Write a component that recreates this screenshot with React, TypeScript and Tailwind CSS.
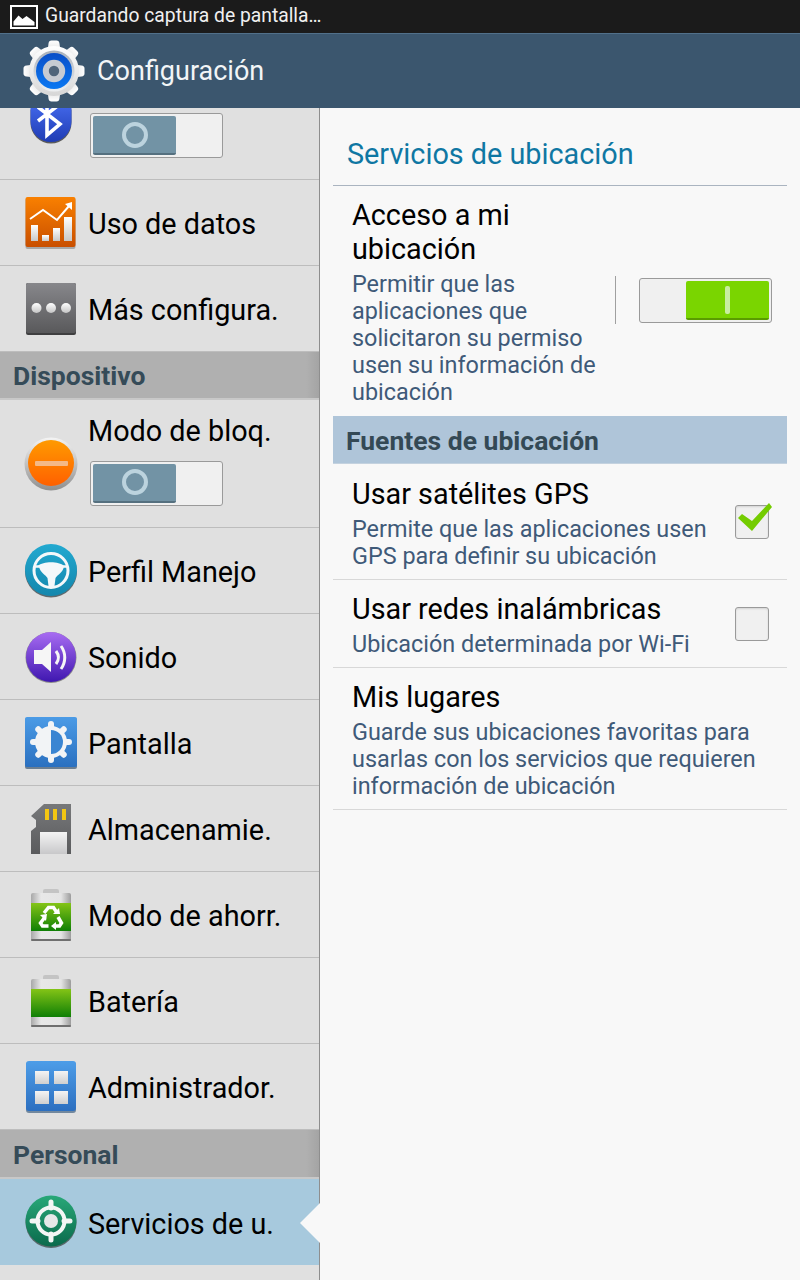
import type { ReactNode } from 'react';

const roboto = { fontFamily: 'Roboto, sans-serif' };

function Gradient({ id, from, to }: { id: string; from: string; to: string }) {
  return (
    <linearGradient id={id} x1="0" y1="0" x2="0" y2="1">
      <stop offset="0" stopColor={from} />
      <stop offset="1" stopColor={to} />
    </linearGradient>
  );
}

function ScreenshotIcon() {
  return (
    <svg width="28" height="24" viewBox="0 0 28 24">
      <rect x="1" y="1" width="26" height="22" fill="none" stroke="#fff" strokeWidth="2" />
      <path d="M3.500 20.500v-4l5-6 4 3.500 4-3 8 6v3.500z" fill="#fff" />
    </svg>
  );
}

function GearIcon() {
  const teeth = [0, 45, 90, 135, 180, 225, 270, 315];
  return (
    <svg width="62" height="62" viewBox="0 0 62 62">
      <defs>
        <Gradient id="gear" from="#ffffff" to="#d6d6d6" />
        <Gradient id="gearRing" from="#a9b0ba" to="#eef0f2" />
        <Gradient id="gearBlue" from="#0a4fc8" to="#0a78f2" />
      </defs>
      {teeth.map((a) => (
        <path key={a} d="M24 16l1.500-12.500q.3-3 3-3h5q2.700 0 3 3L38 16z" fill="url(#gear)" transform={`rotate(${a} 31 31)`} />
      ))}
      <circle cx="31" cy="31" r="25" fill="url(#gear)" />
      <circle cx="31" cy="31" r="20.500" fill="url(#gearRing)" />
      <circle cx="31" cy="31" r="18" fill="url(#gearBlue)" />
      <circle cx="31" cy="31" r="8.200" fill="#50657a" stroke="#c6cbd2" strokeWidth="6" />
    </svg>
  );
}

function BluetoothIcon() {
  return (
    <svg width="42" height="36" viewBox="0 0 42 36">
      <defs>
        <Gradient id="bt" from="#3f63e4" to="#1f3cb4" />
      </defs>
      <path d="M0.500 0h41v13.500a20.500 20.500 0 0 1-41 0z" fill="#5b5b5b" transform="translate(0 1.500)" />
      <path d="M0.500 0h41v13.500a20.500 20.500 0 0 1-41 0z" fill="url(#bt)" />
      <path d="M8 -1l22 17-13 11V-13l13 9-22 17" fill="none" stroke="#fff" strokeWidth="3.600" />
    </svg>
  );
}

function DataIcon() {
  return (
    <svg width="52" height="52" viewBox="0 0 52 52">
      <defs>
        <Gradient id="dataBg" from="#f98000" to="#c94f00" />
        <Gradient id="dataBar" from="#ffffff" to="#c8c8c8" />
      </defs>
      <rect x="0.500" y="1" width="50" height="51" rx="2" fill="#a8a8a8" />
      <rect x="0.500" y="0" width="50" height="50" rx="2" fill="url(#dataBg)" />
      <path d="M5 22l13-9 14 10 12-14" fill="none" stroke="#fff" strokeWidth="2" />
      <path d="M40 7l7-2v8z" fill="#fff" />
      <rect x="6" y="28" width="7" height="16" fill="url(#dataBar)" />
      <rect x="17" y="38" width="7" height="6" fill="url(#dataBar)" />
      <rect x="28" y="31" width="7" height="13" fill="url(#dataBar)" />
      <rect x="39" y="20" width="8" height="24" fill="url(#dataBar)" />
    </svg>
  );
}

function MoreIcon() {
  return (
    <svg width="52" height="52" viewBox="0 0 52 52">
      <defs>
        <Gradient id="moreBg" from="#87878b" to="#59595b" />
        <Gradient id="moreDot" from="#ffffff" to="#c4c4c4" />
      </defs>
      <rect x="1" y="0" width="50" height="52" rx="2" fill="#3f3f40" />
      <rect x="1" y="0" width="50" height="50" rx="2" fill="url(#moreBg)" />
      <circle cx="11.500" cy="25" r="5" fill="url(#moreDot)" />
      <circle cx="26" cy="25" r="5" fill="url(#moreDot)" />
      <circle cx="41" cy="25" r="5" fill="url(#moreDot)" />
    </svg>
  );
}

function BlockIcon() {
  return (
    <svg width="54" height="54" viewBox="0 0 54 54">
      <defs>
        <Gradient id="blockRim" from="#f4f4f4" to="#8f8f8f" />
        <Gradient id="blockBg" from="#ff9a00" to="#ff6000" />
      </defs>
      <circle cx="27" cy="27" r="26.500" fill="url(#blockRim)" />
      <circle cx="27" cy="26" r="23" fill="url(#blockBg)" />
      <rect x="11" y="24" width="33" height="5" rx="1" fill="#f4b987" />
    </svg>
  );
}

function DriveIcon() {
  return (
    <svg width="54" height="54" viewBox="0 0 54 54">
      <defs>
        <Gradient id="driveBg" from="#22a9d0" to="#1487ad" />
      </defs>
      <circle cx="27" cy="27.500" r="26" fill="#606a6e" />
      <circle cx="27" cy="26" r="26" fill="url(#driveBg)" />
      <circle cx="27" cy="26.500" r="17" fill="none" stroke="#f4f8fa" strokeWidth="3" />
      <path d="M10 22.500h34" stroke="#f4f8fa" strokeWidth="2.500" />
      <path d="M14 22c5-5 21-5 26 0-1 7-7 9-8.500 12l-1 8h-6l-1-8c-1.500-3-7.500-5-8.500-12z" fill="#f4f8fa" />
    </svg>
  );
}

function SoundIcon() {
  return (
    <svg width="52" height="52" viewBox="0 0 52 52">
      <defs>
        <Gradient id="soundBg" from="#a86cf2" to="#3f17b0" />
      </defs>
      <circle cx="26" cy="26.500" r="25.500" fill="#8a8a8a" />
      <circle cx="26" cy="26" r="25" fill="url(#soundBg)" />
      <path d="M9 19h8l9-8v30l-9-8H9z" fill="#f6f6f6" />
      <path d="M31 20c3 4 3 9 0 13M36 15c5 7 5 16 0 23" fill="none" stroke="#f6f6f6" strokeWidth="3" />
    </svg>
  );
}

function DisplayIcon() {
  const rays = [0, 45, 90, 135, 180, 225, 270, 315];
  return (
    <svg width="52" height="52" viewBox="0 0 52 52">
      <defs>
        <Gradient id="displayBg" from="#4b9be6" to="#2a70c0" />
      </defs>
      <rect x="0" y="1" width="52" height="51" rx="2" fill="#6c7f92" />
      <rect x="0" y="0" width="52" height="50" rx="2" fill="url(#displayBg)" />
      {rays.map((a) => (
        <rect key={a} x="23" y="4" width="6" height="10" rx="3" fill="#f2f4f6" transform={`rotate(${a} 26 25)`} />
      ))}
      <circle cx="26" cy="25" r="16" fill="#f2f4f6" />
      <path d="M26 13a12 12 0 0 1 0 24z" fill="#3a85d2" />
    </svg>
  );
}

function StorageIcon() {
  return (
    <svg width="42" height="50" viewBox="0 0 42 50">
      <defs>
        <Gradient id="sdBg" from="#77787a" to="#5a5b5d" />
        <Gradient id="sdLabel" from="#f4f4f4" to="#c8c8ca" />
      </defs>
      <path d="M14 0h27v50H1V27l5-4V16l-5-4z" fill="url(#sdBg)" />
      <rect x="15" y="5" width="4" height="11" fill="#f3c612" />
      <rect x="23" y="5" width="4" height="11" fill="#f3c612" />
      <rect x="32" y="5" width="4" height="11" fill="#f3c612" />
      <rect x="10" y="28" width="27" height="22" fill="url(#sdLabel)" />
    </svg>
  );
}

function BatteryIcon({ recycle, id }: { recycle?: boolean; id: string }) {
  return (
    <svg width="42" height="52" viewBox="0 0 42 52">
      <defs>
        <Gradient id={`${id}Fill`} from="#84c416" to="#0f7f06" />
        <linearGradient id={`${id}Metal`} x1="0" y1="0" x2="1" y2="0">
          <stop offset="0" stopColor="#a8a8a8" />
          <stop offset="0.25" stopColor="#e8e8e8" />
          <stop offset="0.75" stopColor="#e4e4e4" />
          <stop offset="1" stopColor="#9c9c9c" />
        </linearGradient>
      </defs>
      <rect x="13" y="0" width="16" height="6" rx="2" fill="#c4c4c4" />
      <rect x="1" y="4" width="40" height="48" rx="2" fill={`url(#${id}Metal)`} />
      <rect x="1" y="50" width="40" height="2" rx="1" fill="#6f6f6f" />
      <rect x="1" y="14" width="40" height="28" fill={`url(#${id}Fill)`} />
      {recycle && (
        <g fill="#fff">
          <path d="M14 24l4.500-5.500h5l3 4.500" fill="none" stroke="#fff" strokeWidth="3.500" />
          <path d="M23 25h7l-1-6z" />
          <path d="M28 28l3.500 6-2 3h-4.500" fill="none" stroke="#fff" strokeWidth="3.500" />
          <path d="M26 33v8l-5-4z" />
          <path d="M15 28l-4.500 6 2 3h6" fill="none" stroke="#fff" strokeWidth="3.500" />
          <path d="M10 26l7-1-1 7z" />
        </g>
      )}
    </svg>
  );
}

function AppsIcon() {
  return (
    <svg width="52" height="52" viewBox="0 0 52 52">
      <defs>
        <Gradient id="appsBg" from="#4d9de8" to="#2c6fc0" />
        <Gradient id="appsTile" from="#f4f4f4" to="#cfcfcf" />
      </defs>
      <rect x="1" y="1" width="50" height="51" rx="3" fill="#72889e" />
      <rect x="1" y="0" width="50" height="50" rx="3" fill="url(#appsBg)" />
      <rect x="10" y="10" width="14" height="13" fill="url(#appsTile)" />
      <rect x="29" y="10" width="14" height="13" fill="url(#appsTile)" />
      <rect x="10" y="30" width="14" height="13" fill="url(#appsTile)" />
      <rect x="29" y="30" width="14" height="13" fill="url(#appsTile)" />
    </svg>
  );
}

function LocationIcon() {
  return (
    <svg width="52" height="54" viewBox="0 0 52 54">
      <defs>
        <Gradient id="locBg" from="#28a878" to="#0b6a4c" />
      </defs>
      <circle cx="26" cy="27.500" r="25.500" fill="#59686a" />
      <circle cx="26" cy="26" r="25.500" fill="url(#locBg)" />
      <circle cx="26" cy="26" r="13.500" fill="none" stroke="#f4f6f5" strokeWidth="4" />
      <circle cx="26" cy="26" r="7" fill="#e6e8e8" />
      <path d="M26 7v6M26 39v6M7 26h6M39 26h6" stroke="#f4f6f5" strokeWidth="5" strokeLinecap="round" />
    </svg>
  );
}

function OffToggle() {
  return (
    <div className="flex h-[45px] w-[133px] rounded-[3px] border border-[#9a9a9a] bg-[#f0f0f0] p-[2px]">
      <div className="flex h-full w-[83px] items-center justify-center rounded-[2px] border-b-2 border-[#55707f] bg-[#7293a5]">
        <div className="h-[26px] w-[26px] rounded-full border-[4px] border-[#bcd3de]" />
      </div>
    </div>
  );
}

function OnToggle() {
  return (
    <div className="flex h-[45px] w-[133px] justify-end rounded-[3px] border border-[#9a9a9a] bg-[#f0f0f0] p-[2px]">
      <div className="flex h-full w-[83px] items-center justify-center rounded-[2px] border-b-2 border-[#5a9c00] bg-[#7ad500]">
        <div className="h-[28px] w-[5px] rounded-[2px] bg-[#c9eea0]" />
      </div>
    </div>
  );
}

function Checkbox({ checked }: { checked?: boolean }) {
  return (
    <div className="relative mr-[18px] h-[34px] w-[34px] shrink-0 rounded-[3px] border border-[#9a9a9a] bg-[#f0f0f0] shadow-[inset_0_1px_2px_rgba(0,0,0,0.12)]">
      {checked && (
        <svg className="absolute left-[-1px] top-[-4px]" width="38" height="30" viewBox="0 0 38 30">
          <path d="M3 16l4-4 10 7L34 1l3 4-20 24z" fill="#74cc00" />
        </svg>
      )}
    </div>
  );
}

function NavRow({ icon, label, selected }: { icon: ReactNode; label: string; selected?: boolean }) {
  return (
    <div className={`flex h-[86px] shrink-0 items-center ${selected ? 'bg-[#a7c9dd]' : 'border-b border-[#bdbdbd]'}`}>
      <div className="flex w-[88px] shrink-0 justify-center pl-[14px]">{icon}</div>
      <span className="pt-[3px] text-[28.8px] leading-[34px] text-black">{label}</span>
    </div>
  );
}

function NavHeader({ label, tall }: { label: string; tall?: boolean }) {
  return (
    <div className={`flex shrink-0 items-center border-b-2 border-[#c8c8c8] bg-[linear-gradient(to_right,#b0b0b0_96%,#a4a4a4)] pl-[13px] pt-[2px] text-[26.5px] font-bold text-[#354b58] ${tall ? 'h-[49px]' : 'h-[48px]'}`}>
      {label}
    </div>
  );
}

function Title({ children }: { children: ReactNode }) {
  return <div className="text-[28.8px] leading-[34px] text-black">{children}</div>;
}

function Summary({ children }: { children: ReactNode }) {
  return <div className="mt-[5px] text-[23.4px] leading-[27px] text-[#3f5a78]">{children}</div>;
}

export default function App() {
  return (
    <div className="flex h-[1280px] w-[800px] flex-col overflow-hidden bg-[#f8f8f8]" style={roboto}>
      {/* Status bar */}
      <div className="flex h-[33px] shrink-0 items-center gap-[7px] bg-[#1b1b1b] pl-[10px] text-[19.3px] text-[#f0f0f0]">
        <ScreenshotIcon />
        <span>Guardando captura de pantalla…</span>
      </div>

      {/* Action bar */}
      <div className="flex h-[75px] shrink-0 items-center gap-[12px] border-t border-[#51708a] bg-[#3b566e] pl-[23px] text-[27px] text-[#f2f5f7]">
        <GearIcon />
        <span>Configuración</span>
      </div>

      <div className="flex min-h-0 flex-1">
        {/* Left pane */}
        <div className="flex w-[320px] shrink-0 flex-col overflow-hidden border-r border-[#8e8e8e] bg-[#e0e0e0]">
          <div className="flex h-[72px] shrink-0 border-b border-[#bdbdbd]">
            <div className="ml-[30px] mr-[18px] shrink-0">
              <BluetoothIcon />
            </div>
            <div className="pt-[5px]">
              <OffToggle />
            </div>
          </div>
          <NavRow icon={<DataIcon />} label="Uso de datos" />
          <NavRow icon={<MoreIcon />} label="Más configura." />
          <NavHeader label="Dispositivo" />
          <div className="flex h-[128px] shrink-0 items-center border-b border-[#bdbdbd]">
            <div className="flex w-[88px] shrink-0 justify-center pl-[14px]">
              <BlockIcon />
            </div>
            <div className="pb-[8px]">
              <div className="mb-[13px] text-[28.8px] leading-[34px] text-black">Modo de bloq.</div>
              <div className="ml-[2px]">
                <OffToggle />
              </div>
            </div>
          </div>
          <NavRow icon={<DriveIcon />} label="Perfil Manejo" />
          <NavRow icon={<SoundIcon />} label="Sonido" />
          <NavRow icon={<DisplayIcon />} label="Pantalla" />
          <NavRow icon={<StorageIcon />} label="Almacenamie." />
          <NavRow icon={<BatteryIcon id="saver" recycle />} label="Modo de ahorr." />
          <NavRow icon={<BatteryIcon id="battery" />} label="Batería" />
          <NavRow icon={<AppsIcon />} label="Administrador." />
          <NavHeader label="Personal" tall />
          <NavRow icon={<LocationIcon />} label="Servicios de u." selected />
        </div>

        {/* Right pane */}
        <div className="relative min-w-0 flex-1">
          <div className="absolute left-[-20px] top-[1094px] h-0 w-0 border-y-[21px] border-r-[21px] border-y-transparent border-r-[#f8f8f8]" />
          <div className="ml-[13px] mr-[13px]">
            <div className="flex h-[78px] items-end border-b border-[#aab4c0] pb-[9px] pl-[14px] text-[28.8px] text-[#0f77a3]">
              Servicios de ubicación
            </div>
            <div className="flex h-[230px] items-start">
              <div className="w-[282px] shrink-0 pl-[19px] pt-[12px]">
                <Title>Acceso a mi ubicación</Title>
                <Summary>
                  Permitir que las aplicaciones que solicitaron su permiso usen su información de ubicación
                </Summary>
              </div>
              <div className="mt-[90px] h-[48px] w-px bg-[#a0a0a0]" />
              <div className="ml-[23px] mt-[92px]">
                <OnToggle />
              </div>
            </div>
            <div className="flex h-[48px] items-center border-b border-[#c4d2df] bg-[#afc5d9] pl-[13px] pt-[2px] text-[26.5px] font-bold text-[#344955]">
              Fuentes de ubicación
            </div>
            <div className="flex h-[116px] items-center border-b border-[#d8d8d8]">
              <div className="min-w-0 flex-1 self-start pl-[19px] pt-[13px]">
                <Title>Usar satélites GPS</Title>
                <Summary>Permite que las aplicaciones usen GPS para definir su ubicación</Summary>
              </div>
              <Checkbox checked />
            </div>
            <div className="flex h-[88px] items-center border-b border-[#d8d8d8]">
              <div className="min-w-0 flex-1 self-start pl-[19px] pt-[12px]">
                <Title>Usar redes inalámbricas</Title>
                <Summary>Ubicación determinada por Wi-Fi</Summary>
              </div>
              <Checkbox />
            </div>
            <div className="h-[142px] border-b border-[#d8d8d8] pl-[19px] pr-[18px] pt-[12px]">
              <Title>Mis lugares</Title>
              <Summary>
                Guarde sus ubicaciones favoritas para usarlas con los servicios que requieren información de ubicación
              </Summary>
            </div>
          </div>
        </div>
      </div>
    </div>
  );
}
